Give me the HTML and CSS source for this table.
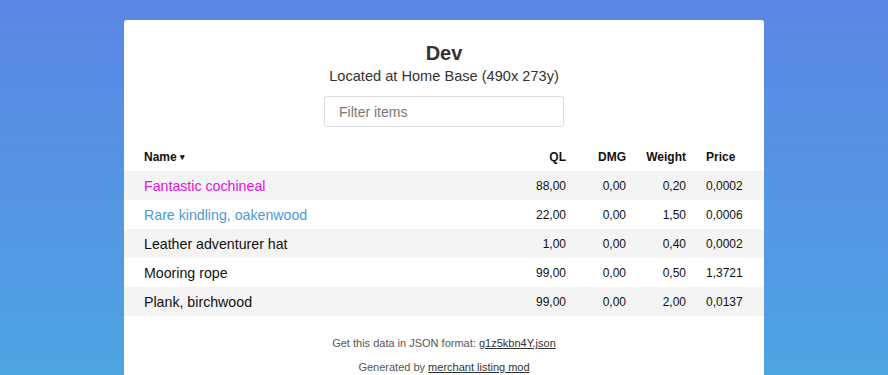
FILE: index.html
```html
<!DOCTYPE html>
<html lang="en">
<head>
<meta charset="utf-8">
<title>Dev - merchant listing</title>
<link rel="stylesheet" href="styles.css">
</head>
<body>
<main class="card">
  <header class="head">
    <h1 class="title">Dev</h1>
    <p class="location">Located at Home Base (490x 273y)</p>
    <input class="filter" type="text" placeholder="Filter items">
  </header>
  <table class="items">
    <thead>
      <tr>
        <th class="c-name">Name <span class="caret">&#9662;</span></th>
        <th class="c-num">QL</th>
        <th class="c-num">DMG</th>
        <th class="c-num">Weight</th>
        <th class="c-price">Price</th>
      </tr>
    </thead>
    <tbody>
      <tr><td class="c-name q-legend">Fantastic cochineal</td><td class="c-num">88,00</td><td class="c-num">0,00</td><td class="c-num">0,20</td><td class="c-price">0,0002</td></tr>
      <tr><td class="c-name q-rare">Rare kindling, oakenwood</td><td class="c-num">22,00</td><td class="c-num">0,00</td><td class="c-num">1,50</td><td class="c-price">0,0006</td></tr>
      <tr><td class="c-name">Leather adventurer hat</td><td class="c-num">1,00</td><td class="c-num">0,00</td><td class="c-num">0,40</td><td class="c-price">0,0002</td></tr>
      <tr><td class="c-name">Mooring rope</td><td class="c-num">99,00</td><td class="c-num">0,00</td><td class="c-num">0,50</td><td class="c-price">1,3721</td></tr>
      <tr><td class="c-name">Plank, birchwood</td><td class="c-num">99,00</td><td class="c-num">0,00</td><td class="c-num">2,00</td><td class="c-price">0,0137</td></tr>
    </tbody>
  </table>
  <footer class="foot">
    <p>Get this data in JSON format: <a href="#">g1z5kbn4Y.json</a></p>
    <p>Generated by <a href="#">merchant listing mod</a></p>
  </footer>
</main>
</body>
</html>
```
FILE: styles.css
```css
html {
  background: linear-gradient(180deg, #5b86e5 0px, #4ea4e1 375px);
  min-height: 100%;
}
body {
  margin: 0;
  padding: 20px 0 0;
  font-family: "Liberation Sans", Arial, sans-serif;
  color: #222;
}
.card {
  width: 640px;
  margin: 0 auto;
  background: #fff;
  border-radius: 3px 3px 0 0;
  padding: 21px 0 40px;
}
.head {
  display: flex;
  flex-direction: column;
  align-items: center;
}
.title {
  margin: 0;
  font-size: 20px;
  line-height: 24px;
  font-weight: bold;
  color: #333;
}
.location {
  margin: 0;
  font-size: 14.6px;
  line-height: 22px;
  color: #333;
}
.filter {
  margin-top: 9px;
  width: 240px;
  height: 31px;
  box-sizing: border-box;
  border: 1px solid #ddd;
  border-radius: 3px;
  padding: 0 14px;
  font-family: "Liberation Sans", Arial, sans-serif;
  font-size: 14px;
  color: #333;
  outline: none;
}
.filter::placeholder {
  color: #777;
}
.items {
  width: 100%;
  margin-top: 16px;
  border-collapse: collapse;
  table-layout: fixed;
}
.items th, .items td {
  padding: 0 0 0 20px;
  height: 29px;
  white-space: nowrap;
}
.items th {
  font-size: 12px;
  font-weight: bold;
  color: #111;
  height: 28px;
}
.items td {
  font-size: 12px;
  color: #111;
}
.items td.c-name {
  font-size: 14.2px;
}
.items tbody tr:nth-child(odd) {
  background: #f4f4f4;
}
.c-name {
  text-align: left;
}
.c-num {
  width: 40px;
  text-align: right;
}
.c-price {
  width: 38px;
  text-align: left;
  padding-right: 20px !important;
}
.caret {
  font-size: 9px;
  vertical-align: 1px;
}
.q-legend {
  color: #e014e0 !important;
}
.q-rare {
  color: #4b9bd6 !important;
}
.foot {
  padding-top: 21px;
  text-align: center;
  font-size: 11px;
  color: #555;
}
.foot p {
  margin: 0 0 11px;
  line-height: 13px;
}
.foot a {
  color: #333;
}
```
